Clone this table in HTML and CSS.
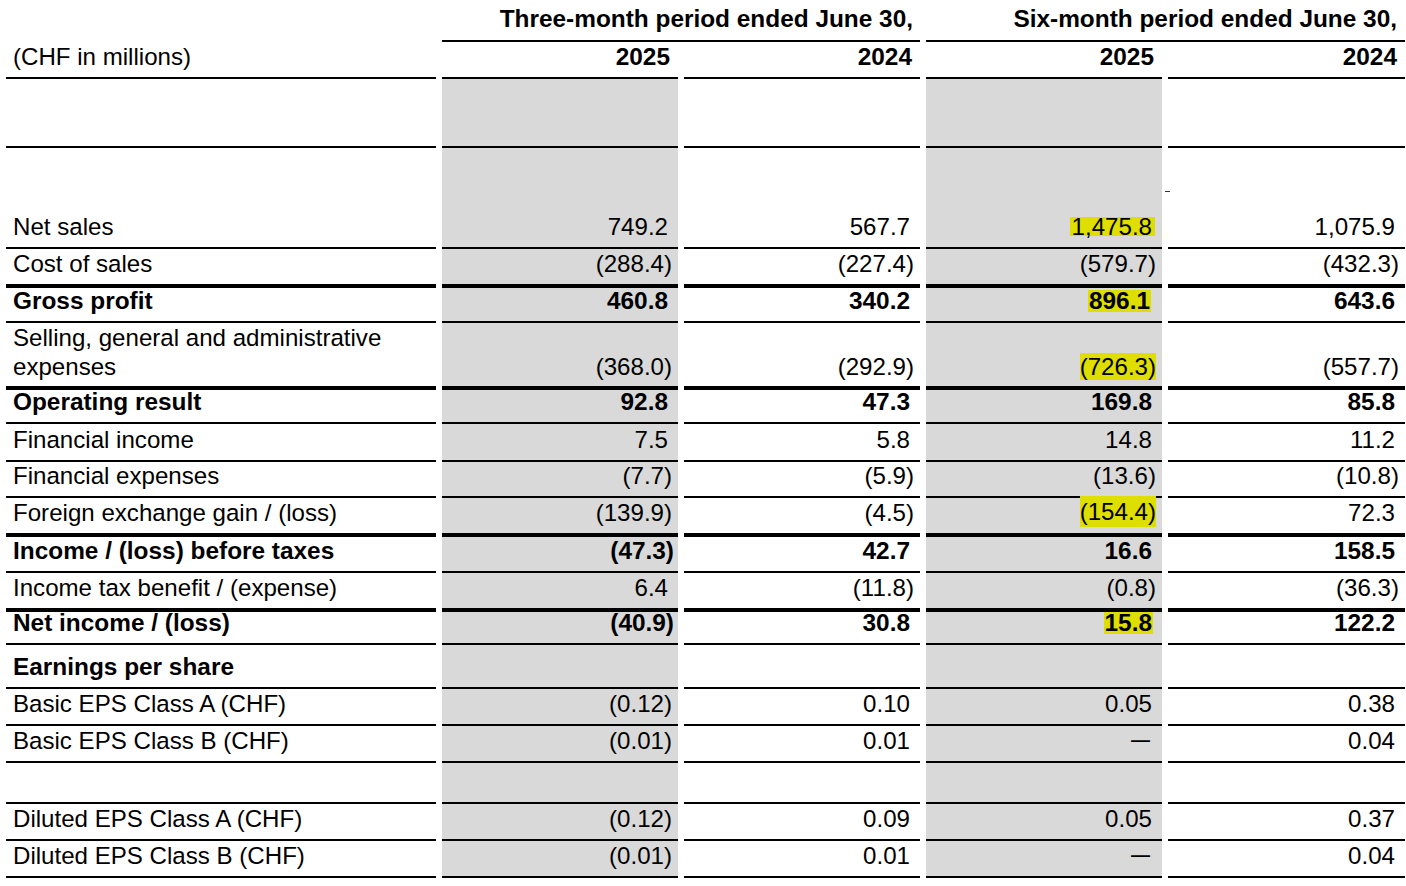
FILE: index.html
```html
<!DOCTYPE html>
<html lang="en">
<head>
<meta charset="utf-8">
<title>Income statement</title>
<link rel="stylesheet" href="styles.css">
</head>
<body>
<div class="table">
  <div class="row h42">
    <div class="c lbl none"></div>
    <div class="c grp b">Three-month period ended June 30,</div>
    <div class="c grp2 b">Six-month period ended June 30,</div>
  </div>
  <div class="row h37">
    <div class="c lbl">(CHF in millions)</div>
    <div class="c n hd b">2025</div>
    <div class="c n hd b">2024</div>
    <div class="c n hd b">2025</div>
    <div class="c n4 hd b">2024</div>
  </div>
  <div class="row h69">
    <div class="c lbl"></div>
    <div class="c n g"></div>
    <div class="c n"></div>
    <div class="c n g"></div>
    <div class="c n4"></div>
  </div>
  <div class="row h101 rel">
    <div class="c lbl">Net sales</div>
    <div class="c n g">749.2</div>
    <div class="c n">567.7</div>
    <div class="c n g hlc"><span class="v"><span class="hl">1,475.8</span></span></div>
    <div class="c n4">1,075.9</div>
    <span class="stray"></span>
  </div>
  <div class="row h39 thick">
    <div class="c lbl">Cost of sales</div>
    <div class="c n g neg">(288.4)</div>
    <div class="c n neg">(227.4)</div>
    <div class="c n g neg">(579.7)</div>
    <div class="c n4 neg">(432.3)</div>
  </div>
  <div class="row h35 b">
    <div class="c lbl">Gross profit</div>
    <div class="c n g">460.8</div>
    <div class="c n">340.2</div>
    <div class="c n g hlc2"><span class="v"><span class="hl hlb">896.1</span></span></div>
    <div class="c n4">643.6</div>
  </div>
  <div class="row h67 thick sga">
    <div class="c lbl">Selling, general and administrative expenses</div>
    <div class="c n g neg">(368.0)</div>
    <div class="c n neg">(292.9)</div>
    <div class="c n g neg"><span class="v"><span class="hl hlp">(726.3)</span></span></div>
    <div class="c n4 neg">(557.7)</div>
  </div>
  <div class="row h34 b">
    <div class="c lbl">Operating result</div>
    <div class="c n g">92.8</div>
    <div class="c n">47.3</div>
    <div class="c n g">169.8</div>
    <div class="c n4">85.8</div>
  </div>
  <div class="row h38">
    <div class="c lbl">Financial income</div>
    <div class="c n g">7.5</div>
    <div class="c n">5.8</div>
    <div class="c n g">14.8</div>
    <div class="c n4">11.2</div>
  </div>
  <div class="row h36">
    <div class="c lbl">Financial expenses</div>
    <div class="c n g neg">(7.7)</div>
    <div class="c n neg">(5.9)</div>
    <div class="c n g neg">(13.6)</div>
    <div class="c n4 neg">(10.8)</div>
  </div>
  <div class="row h39 thick">
    <div class="c lbl">Foreign exchange gain / (loss)</div>
    <div class="c n g neg">(139.9)</div>
    <div class="c n neg">(4.5)</div>
    <div class="c n g neg"><span class="v"><span class="hl hlp hlt">(154.4)</span></span></div>
    <div class="c n4">72.3</div>
  </div>
  <div class="row h36 b">
    <div class="c lbl">Income / (loss) before taxes</div>
    <div class="c n g negb">(47.3)</div>
    <div class="c n">42.7</div>
    <div class="c n g">16.6</div>
    <div class="c n4">158.5</div>
  </div>
  <div class="row h39 thick">
    <div class="c lbl">Income tax benefit / (expense)</div>
    <div class="c n g">6.4</div>
    <div class="c n neg">(11.8)</div>
    <div class="c n g neg">(0.8)</div>
    <div class="c n4 neg">(36.3)</div>
  </div>
  <div class="row h33 b">
    <div class="c lbl">Net income / (loss)</div>
    <div class="c n g negb">(40.9)</div>
    <div class="c n">30.8</div>
    <div class="c n g hlc3"><span class="v"><span class="hl hlb">15.8</span></span></div>
    <div class="c n4">122.2</div>
  </div>
  <div class="row h44 b">
    <div class="c lbl">Earnings per share</div>
    <div class="c n g"></div>
    <div class="c n"></div>
    <div class="c n g"></div>
    <div class="c n4"></div>
  </div>
  <div class="row h37">
    <div class="c lbl">Basic EPS Class A (CHF)</div>
    <div class="c n g neg">(0.12)</div>
    <div class="c n">0.10</div>
    <div class="c n g">0.05</div>
    <div class="c n4">0.38</div>
  </div>
  <div class="row h37">
    <div class="c lbl">Basic EPS Class B (CHF)</div>
    <div class="c n g neg">(0.01)</div>
    <div class="c n">0.01</div>
    <div class="c n g dash">—</div>
    <div class="c n4">0.04</div>
  </div>
  <div class="row h41">
    <div class="c lbl"></div>
    <div class="c n g"></div>
    <div class="c n"></div>
    <div class="c n g"></div>
    <div class="c n4"></div>
  </div>
  <div class="row h37">
    <div class="c lbl">Diluted EPS Class A (CHF)</div>
    <div class="c n g neg">(0.12)</div>
    <div class="c n">0.09</div>
    <div class="c n g">0.05</div>
    <div class="c n4">0.37</div>
  </div>
  <div class="row h37">
    <div class="c lbl">Diluted EPS Class B (CHF)</div>
    <div class="c n g neg">(0.01)</div>
    <div class="c n">0.01</div>
    <div class="c n g dash">—</div>
    <div class="c n4">0.04</div>
  </div>
</div>
</body>
</html>
```
FILE: styles.css
```css
html, body {
  margin: 0;
  padding: 0;
  background: #ffffff;
}
body {
  font-family: "Liberation Sans", Arial, sans-serif;
  font-size: 24.1px;
  color: #000;
}
.table {
  display: flex;
  flex-direction: column;
  width: 1406px;
}
.row {
  display: flex;
  gap: 6px;
  margin-left: 6px;
  box-sizing: border-box;
}
.rel { position: relative; }
.b { font-weight: bold; font-size: 24.4px; }
.c {
  box-sizing: border-box;
  display: flex;
  align-items: flex-end;
  justify-content: flex-end;
  border-bottom: 2px solid #000;
  padding: 0 10px 6px 0;
  line-height: 28px;
  white-space: nowrap;
}
.v { display: block; line-height: 28px; }
.lbl {
  width: 430px;
  justify-content: flex-start;
  padding-left: 7px;
  white-space: normal;
}
.none { border-bottom: none; }
.n { width: 236px; }
.n4 { width: 237px; }
.grp { width: 478px; padding-right: 7px; padding-bottom: 7px; }
.grp2 { width: 479px; padding-right: 8px; padding-bottom: 7px; }
.hd { padding-right: 8px; }
.g { background: #d9d9d9; }
.neg { padding-right: 6px; }
.negb { padding-right: 4px; }
.dash { padding-right: 12px; font-size: 19px; font-weight: bold; padding-bottom: 7px; }
.thick .c { border-bottom-width: 4px; }
.sga .c { padding-bottom: 5px; }
.sga .lbl { line-height: 29px; }

.hl {
  display: inline-block;
  background: #dede00;
  line-height: 19px;
  padding: 0 3px 0 2px;
}
.hlc { padding-right: 7px; }
.hlb { line-height: 22px; padding: 0 1px; }
.hlc2 { padding-right: 11px; }
.hlc3 { padding-right: 9px; }
.hlp { line-height: 27px; padding: 0; }
.hlt { line-height: 31px; }

.h33 { height: 33px; }
.h34 { height: 34px; }
.h35 { height: 35px; }
.h36 { height: 36px; }
.h37 { height: 37px; }
.h38 { height: 38px; }
.h39 { height: 39px; }
.h41 { height: 41px; }
.h42 { height: 42px; }
.h44 { height: 44px; }
.h67 { height: 67px; }
.h69 { height: 69px; }
.h101 { height: 101px; }

.stray {
  position: absolute;
  left: 1159px;
  top: 43px;
  width: 5px;
  height: 1px;
  background: #333;
}
```
